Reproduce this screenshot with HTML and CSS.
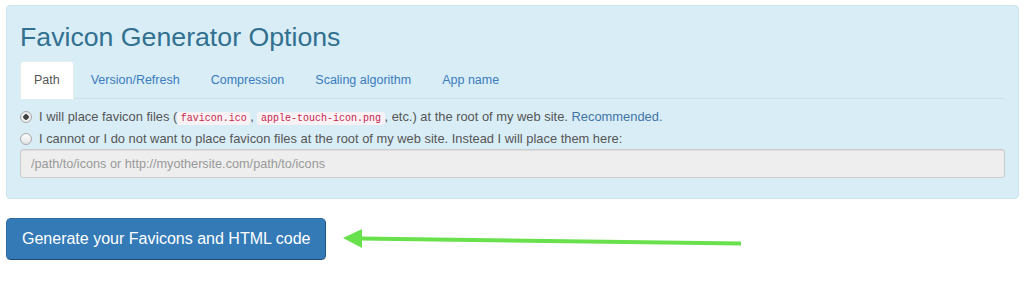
FILE: index.html
```html
<!DOCTYPE html>
<html lang="en">
<head>
	<meta charset="UTF-8">
	<title>Favicon Generator Options</title>
	<link rel="stylesheet" href="styles.css">
</head>
<body>
	<div class="panel">
		<h2 class="panel-title">Favicon Generator Options</h2>
		<ul class="tabs">
			<li class="active"><a href="#path">Path</a></li>
			<li><a href="#version">Version/Refresh</a></li>
			<li><a href="#compression">Compression</a></li>
			<li><a href="#scaling">Scaling algorithm</a></li>
			<li><a href="#app">App name</a></li>
		</ul>
		<div class="tab-body">
			<label class="choice">
				<span class="dot checked"></span>
				<span>I will place favicon files (<code>favicon.ico</code>, <code>apple-touch-icon.png</code>, etc.) at the root of my web site. <span class="hint">Recommended.</span></span>
			</label>
			<label class="choice">
				<span class="dot"></span>
				<span>I cannot or I do not want to place favicon files at the root of my web site. Instead I will place them here:</span>
			</label>
			<input class="path-input" type="text" readonly placeholder="/path/to/icons or http://myothersite.com/path/to/icons">
		</div>
	</div>

	<div class="actions">
		<button class="btn-generate">Generate your Favicons and HTML code</button>
		<svg class="arrow" width="400" height="30" viewBox="0 0 400 30">
			<line x1="18" y1="14.5" x2="399" y2="19.5" stroke="#68e14c" stroke-width="4"/>
			<polygon points="1,14 20,5 20,24" fill="#68e14c"/>
		</svg>
	</div>
</body>
</html>
```

FILE: styles.css
```css
body, div, ul, li, h2 {
	margin: 0;
	padding: 0;
}
body {
	font: 12.5px/18px "Liberation Sans", Arial, sans-serif;
	color: #555;
	background: #fff;
}
ul {
	list-style-type: none;
}
.panel {
	box-sizing: border-box;
	margin: 5px 5px 0 6px;
	width: 1013px;
	height: 194px;
	padding: 0 13px;
	background: #d9edf7;
	border: 1px solid #cbe6f2;
	border-radius: 4px;
}
.panel-title {
	margin: 17px 0 9px;
	font-size: 26.7px;
	line-height: 29px;
	font-weight: 400;
	color: #31708f;
}
.tabs {
	display: flex;
	border-bottom: 1px solid #d3dfe6;
}
.tabs li {
	margin-right: 3px;
	margin-bottom: -1px;
}
.tabs a {
	display: block;
	padding: 0 13px;
	line-height: 36px;
	color: #3a7cbc;
	text-decoration: none;
	border: 1px solid transparent;
	border-radius: 4px 4px 0 0;
}
.tabs li.active a {
	color: #555;
	background: #fff;
	border-color: #e6eef2 #e6eef2 #fff;
}
.tab-body {
	padding-top: 9px;
}
.choice {
	display: flex;
	align-items: center;
	height: 18px;
	margin-bottom: 4px;
	font-size: 12.9px;
}
.dot {
	box-sizing: border-box;
	flex: none;
	width: 12px;
	height: 12px;
	margin: 0 7px 0 0;
	border: 1px solid #a9a9a9;
	border-radius: 50%;
	background: linear-gradient(#fdfdfd, #e4e4e4);
}
.dot.checked {
	background: radial-gradient(circle, #444 0, #444 2.5px, #f2f2f2 3px, #e4e4e4 100%);
}
code {
	padding: 1px 3.5px;
	font: 10px/12px "Liberation Mono", "DejaVu Sans Mono", monospace;
	color: #c7254e;
	background: #f9f2f4;
	border-radius: 3px;
}
.hint {
	color: #3f74a5;
}
.path-input {
	display: block;
	box-sizing: border-box;
	width: 100%;
	height: 29px;
	margin-top: -3px;
	padding: 0 10px;
	font: 12.7px "Liberation Sans", Arial, sans-serif;
	color: #555;
	background: #eee;
	border: 1px solid #ccc;
	border-radius: 3px;
	box-shadow: inset 0 1px 1px rgba(0, 0, 0, 0.075);
	outline: none;
}
.path-input::placeholder {
	color: #999;
}
.actions {
	display: flex;
	align-items: center;
	margin: 19px 0 0 6px;
}
.btn-generate {
	height: 42px;
	padding: 0 15px;
	font: 16px "Liberation Sans", Arial, sans-serif;
	color: #fff;
	background: #337ab7;
	border: 1px solid #2e6da4;
	border-bottom-color: #1d4a72;
	border-right-color: #25598a;
	border-radius: 5px;
	box-shadow: 0 1px 1px rgba(0, 0, 0, 0.25);
	cursor: pointer;
}
.arrow {
	display: block;
	margin-left: 16px;
}
```
